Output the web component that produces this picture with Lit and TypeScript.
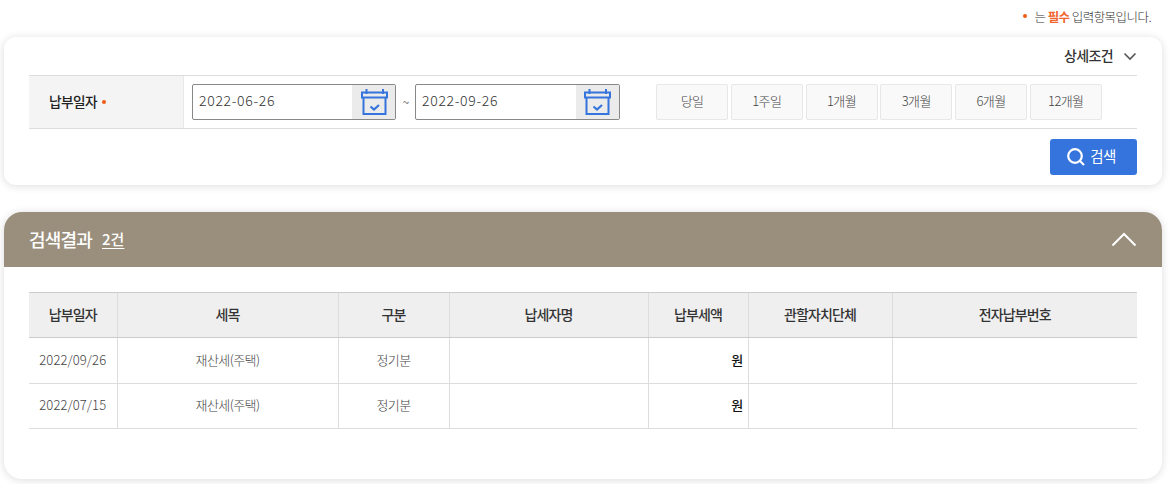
import { LitElement, html, css } from "lit";
import { customElement } from "lit/decorators.js";

const calendar = html`<svg class="cal" width="27" height="26" viewBox="0 0 27 26" fill="none" stroke="#3574dc" stroke-width="2"><rect x="1" y="3.500" width="25" height="5"/><path d="M2.500 9V25H24.500V9"/><path d="M5.500 0V5M22 0V5"/><path d="M9.500 17.500l3.500 3 5-4.500" stroke-width="2.200"/></svg>`;

const periods = ["당일", "1주일", "1개월", "3개월", "6개월", "12개월"];
const cols = [88, 221, 111, 199, 100, 144, 245];
const heads = ["납부일자", "세목", "구분", "납세자명", "납부세액", "관할자치단체", "전자납부번호"];
const rows = ["2022/09/26", "2022/07/15"];

@customElement("app-root")
export class AppRoot extends LitElement {
  static styles = css`
    :host {
      display: block;
      height: 484px;
      overflow: hidden;
      background: #fff;
      font-family: "Noto Sans CJK KR", "Noto Sans", sans-serif;
      color: #333;
      font-size: 13px;
      letter-spacing: -0.6px;
    }
    .page { padding: 0 7px 0 4px; }
    .note {
      height: 37px;
      display: flex;
      align-items: center;
      justify-content: flex-end;
      padding: 0 11px 5px 0;
      box-sizing: border-box;
      font-size: 12.500px;
      letter-spacing: -0.55px;
      font-weight: 300;
      color: #333;
      gap: 4px;
    }
    .dot {
      display: inline-block;
      width: 4px;
      height: 4px;
      border-radius: 50%;
      background: #f05a14;
      flex: none;
    }
    .note b { color: #f0642d; font-weight: 700; }
    .note .dot { margin-right: 3px; }
    .card {
      background: #fff;
      box-shadow: 0 1px 8px rgba(0, 0, 0, 0.14);
      box-sizing: border-box;
    }
    .search {
      height: 148px;
      border-radius: 12px;
      padding: 0 25px;
    }
    .detail {
      height: 38px;
      display: flex;
      align-items: center;
      justify-content: flex-end;
      gap: 10px;
      font-size: 14px;
      font-weight: 500;
      color: #333;
      box-sizing: border-box;
    }
    .detail span { padding-bottom: 2px; }
    .row {
      display: flex;
      height: 54px;
      box-sizing: border-box;
      border-top: 1px solid #ddd;
      border-bottom: 1px solid #ddd;
    }
    .label {
      width: 155px;
      flex: none;
      box-sizing: border-box;
      background: #f4f4f4;
      border-right: 1px solid #e8e8e8;
      display: flex;
      align-items: center;
      gap: 5px;
      padding-left: 20px;
      font-size: 13.700px;
      font-weight: 500;
      color: #222;
    }
    .label span { padding-bottom: 3px; }
    .label .dot { margin-bottom: 1px; }
    .fields {
      display: flex;
      align-items: center;
      padding-left: 8px;
    }
    .input {
      width: 204px;
      height: 36px;
      box-sizing: border-box;
      border: 1px solid #888;
      border-radius: 2px;
      display: flex;
      justify-content: space-between;
      font-size: 14px;
      font-weight: 300;
      color: #333;
      letter-spacing: 0.7px;
    }
    .input.second { width: 205px; }
    .input span { padding: 0 0 4px 6px; align-self: center; }
    .calbox {
      width: 43px;
      box-sizing: border-box;
      background: #ebebeb;
      display: flex;
      align-items: center;
      justify-content: center;
    }
    .input:first-child .calbox { padding-left: 2px; }
    .tilde { width: 19px; text-align: center; font-size: 12px; color: #666; padding-bottom: 2px; }
    .periods {
      display: flex;
      margin-left: 36px;
      gap: 2.750px;
    }
    .periods div {
      width: 72px;
      height: 36px;
      box-sizing: border-box;
      background: #f9f9f9;
      border: 1px solid #e7e7e7;
      border-radius: 2px;
      padding-bottom: 3px;
      display: flex;
      align-items: center;
      justify-content: center;
      color: #444;
      font-size: 13px;
      font-weight: 300;
    }
    .actions {
      display: flex;
      justify-content: flex-end;
      padding-top: 10px;
    }
    .btn {
      width: 87px;
      height: 36px;
      box-sizing: border-box;
      padding-right: 5px;
      background: #3574dc;
      color: #fff;
      border-radius: 3px;
      display: flex;
      align-items: center;
      justify-content: center;
      gap: 4px;
      font-size: 14.500px;
    }
    .btn span { padding-bottom: 3px; }
    .result {
      height: 267px;
      margin-top: 27px;
      border-radius: 18px;
      overflow: hidden;
    }
    .bar {
      height: 55px;
      background: #9a8f7d;
      color: #fff;
      display: flex;
      align-items: center;
      padding: 0 25px;
      gap: 10px;
    }
    .bar h2 { margin: 0 0 2px; font-size: 18px; font-weight: 500; letter-spacing: -0.8px; }
    .bar u { margin-bottom: 2px; font-size: 15px; font-weight: 500; text-underline-offset: 3px; letter-spacing: 0; }
    .bar svg { margin-left: auto; }
    .wrap { padding: 25px 25px 0; }
    table {
      width: 1108px;
      border-collapse: collapse;
      table-layout: fixed;
    }
    th, td { box-sizing: border-box; padding: 0 0 3px; }
    th {
      height: 45px;
      background: #efefef;
      border-top: 1px solid #ccc;
      border-bottom: 1px solid #ccc;
      border-left: 1px solid #ddd;
      font-size: 14px;
      letter-spacing: -0.9px;
      font-weight: 500;
      color: #333;
    }
    td {
      height: 45px;
      border-bottom: 1px solid #ddd;
      border-left: 1px solid #ddd;
      text-align: center;
      font-size: 13px;
      font-weight: 300;
      color: #444;
    }
    tbody tr:first-child td { height: 46px; }
    th:first-child, td:first-child { border-left: 0; }
    td.date { letter-spacing: 0.1px; }
    td.won { text-align: right; padding-right: 5px; color: #111; font-weight: 500; }
  `;

  render() {
    return html`<div class="page">
      <div class="note"><i class="dot"></i><span>는 <b>필수</b> 입력항목입니다.</span></div>
      <section class="card search">
        <div class="detail"><span>상세조건</span>
          <svg width="14" height="9" viewBox="0 0 14 9" fill="none" stroke="#555" stroke-width="1.600"><path d="M1.500 1.500L7 7l5.500-5.500"/></svg>
        </div>
        <div class="row">
          <div class="label"><span>납부일자</span><i class="dot"></i></div>
          <div class="fields">
            <div class="input"><span>2022-06-26</span><div class="calbox">${calendar}</div></div>
            <div class="tilde">~</div>
            <div class="input second"><span>2022-09-26</span><div class="calbox">${calendar}</div></div>
            <div class="periods">${periods.map((p) => html`<div>${p}</div>`)}</div>
          </div>
        </div>
        <div class="actions">
          <div class="btn">
            <svg width="20" height="20" viewBox="0 0 20 20" fill="none" stroke="#fff" stroke-width="2.200"><circle cx="9" cy="9" r="6.800"/><path d="M14 14l4 4"/></svg>
            <span>검색</span>
          </div>
        </div>
      </section>
      <section class="card result">
        <div class="bar">
          <h2>검색결과</h2><u>2건</u>
          <svg width="26" height="15" viewBox="0 0 26 15" fill="none" stroke="#fff" stroke-width="2"><path d="M1.500 13.500L13 2l11.500 11.500"/></svg>
        </div>
        <div class="wrap">
          <table>
            <colgroup>${cols.map((w) => html`<col style="width:${w}px" />`)}</colgroup>
            <thead><tr>${heads.map((h) => html`<th>${h}</th>`)}</tr></thead>
            <tbody>
              ${rows.map((d) => html`<tr>
                <td class="date">${d}</td><td>재산세(주택)</td><td>정기분</td><td></td>
                <td class="won">원</td><td></td><td></td>
              </tr>`)}
            </tbody>
          </table>
        </div>
      </section>
    </div>`;
  }
}
